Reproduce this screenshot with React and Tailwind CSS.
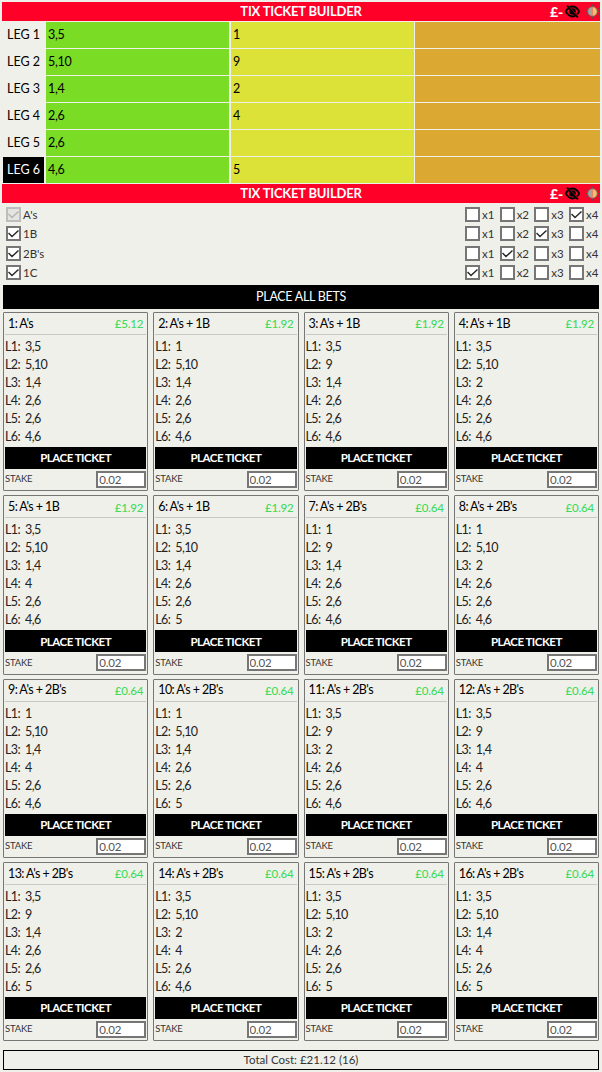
import React from "react";

const FONT = "[font-family:Lato,'Open_Sans',sans-serif]";

const legs = [
  ["LEG 1", "3,5", "1"],
  ["LEG 2", "5,10", "9"],
  ["LEG 3", "1,4", "2"],
  ["LEG 4", "2,6", "4"],
  ["LEG 5", "2,6", ""],
  ["LEG 6", "4,6", "5"],
];

const options = [
  ["A's", 4, true],
  ["1B", 3, false],
  ["2B's", 2, false],
  ["1C", 1, false],
];

const tickets = [
  ["1: A's", "£5.12", ["3,5", "5,10", "1,4", "2,6", "2,6", "4,6"]],
  ["2: A's + 1B", "£1.92", ["1", "5,10", "1,4", "2,6", "2,6", "4,6"]],
  ["3: A's + 1B", "£1.92", ["3,5", "9", "1,4", "2,6", "2,6", "4,6"]],
  ["4: A's + 1B", "£1.92", ["3,5", "5,10", "2", "2,6", "2,6", "4,6"]],
  ["5: A's + 1B", "£1.92", ["3,5", "5,10", "1,4", "4", "2,6", "4,6"]],
  ["6: A's + 1B", "£1.92", ["3,5", "5,10", "1,4", "2,6", "2,6", "5"]],
  ["7: A's + 2B's", "£0.64", ["1", "9", "1,4", "2,6", "2,6", "4,6"]],
  ["8: A's + 2B's", "£0.64", ["1", "5,10", "2", "2,6", "2,6", "4,6"]],
  ["9: A's + 2B's", "£0.64", ["1", "5,10", "1,4", "4", "2,6", "4,6"]],
  ["10: A's + 2B's", "£0.64", ["1", "5,10", "1,4", "2,6", "2,6", "5"]],
  ["11: A's + 2B's", "£0.64", ["3,5", "9", "2", "2,6", "2,6", "4,6"]],
  ["12: A's + 2B's", "£0.64", ["3,5", "9", "1,4", "4", "2,6", "4,6"]],
  ["13: A's + 2B's", "£0.64", ["3,5", "9", "1,4", "2,6", "2,6", "5"]],
  ["14: A's + 2B's", "£0.64", ["3,5", "5,10", "2", "4", "2,6", "4,6"]],
  ["15: A's + 2B's", "£0.64", ["3,5", "5,10", "2", "2,6", "2,6", "5"]],
  ["16: A's + 2B's", "£0.64", ["3,5", "5,10", "1,4", "4", "2,6", "5"]],
];

function SunHalf() {
  const rays = [0, 30, 60, 90, 120, 150, 180, 210, 240, 270, 300, 330];
  return (
    <svg width="15" height="15" viewBox="0 0 30 30" className="block">
      {rays.map((a) => (
        <line key={a} x1="15" y1="0.5" x2="15" y2="5.5" stroke="#6a4a4a" strokeWidth="2" transform={`rotate(${a} 15 15)`} />
      ))}
      <path d="M15 5.5a9.5 9.5 0 0 0 0 19z" fill="#a3a3a3" />
      <path d="M15 5.5a9.5 9.5 0 0 1 0 19z" fill="#f3bd6c" />
      <circle cx="15" cy="15" r="9.5" fill="none" stroke="#7a6a5a" strokeWidth="1.4" />
    </svg>
  );
}

function EyeOff() {
  return (
    <svg width="15" height="13" viewBox="0 0 30 26" fill="none" className="block">
      <path d="M1.5 13 C6 5.5 10 3 15 3 C20 3 24 5.5 28.5 13 C24 20.5 20 23 15 23 C10 23 6 20.5 1.5 13 Z" stroke="#000" strokeWidth="3.8" />
      <circle cx="15" cy="13" r="6.5" fill="#000" />
      <line x1="4" y1="1" x2="26" y2="25" stroke="#000" strokeWidth="3.8" />
      <line x1="8" y1="3" x2="27" y2="23.5" stroke="#ff0029" strokeWidth="1.2" />
    </svg>
  );
}

function Header() {
  return (
    <div className="relative mx-[2px] h-[19px] bg-[#ff0029] flex items-center justify-center text-white font-bold text-[13px] tracking-[-0.2px]">
      <span>TIX TICKET BUILDER</span>
      <div className="absolute right-[0px] top-[2px] flex items-center">
        <span className="text-[14px] leading-[15px] font-black mr-[2px]">£-</span>
        <EyeOff />
        <span className="ml-[5px]"><SunHalf /></span>
      </div>
    </div>
  );
}

function Check({ checked, disabled }) {
  return (
    <span
      className={`inline-flex items-center justify-center w-[15px] h-[15px] shrink-0 border-2 ${
        disabled ? "border-[#bdbdbd] bg-[#e4e4e0]" : "border-[#767676] bg-white"
      }`}
    >
      {checked && (
        <svg width="11" height="11" viewBox="0 0 11 11" fill="none">
          <path
            d="M0.5 5 L4 8.5 L10.5 2.5"
            stroke={disabled ? "#b5b5b5" : "#2a2a2a"}
            strokeWidth="1.5"
          />
        </svg>
      )}
    </span>
  );
}

function Ticket({ title, price, lines }) {
  return (
    <div className="h-[179.33px] border border-[#767676] rounded-[1px] flex flex-col px-[1px]">
      <div className="flex justify-between items-center h-[21px] mt-[1px] pl-[3px] pr-[3px] border-b border-[#c8c8c4] text-[12.5px] tracking-[-0.6px] leading-none">
        <span className="text-black">{title}</span>
        <span className="text-[#3ddc5c] font-medium text-[11.5px] tracking-[-0.2px]">{price}</span>
      </div>
      <div className="flex flex-col pt-[3px]">
        {lines.map((v, i) => (
          <div key={i} className="h-[18px] leading-[18px] text-[12.5px] tracking-[-0.6px] text-[#222] flex">
            <span className="w-[20px]">L{i + 1}:</span>
            <span>{v}</span>
          </div>
        ))}
      </div>
      <button className="mt-[1px] h-[22px] bg-black text-white font-bold text-[11.5px] tracking-[-0.5px]">
        PLACE TICKET
      </button>
      <div className="flex items-center justify-between mt-[2px]">
        <span className="text-[9.5px] tracking-[-0.2px] text-[#333]">STAKE</span>
        <input
          readOnly
          value="0.02"
          className="w-[50px] h-[17px] border-2 border-[#767676] bg-white text-[11.5px] tracking-[-0.2px] px-[1px] text-[#555] outline-none"
        />
      </div>
    </div>
  );
}

export default function App() {
  return (
    <div className={`w-[602px] h-[1072px] bg-[#f0f0ea] pt-[2px] overflow-hidden text-black ${FONT}`}>
      <Header />
      <div className="pt-[1px] px-[3px]">
        {legs.map(([leg, a, b], i) => (
          <div key={leg} className="grid grid-cols-[41px_183px_183px_184px] gap-x-[2px] h-[27px] text-[12.5px] tracking-[-0.3px] leading-none">
            <div className={`h-[26px] pt-[1px] flex items-center justify-center tracking-[0px] ${i === 5 ? "bg-black text-white" : ""}`}>{leg}</div>
            <div className="h-[26px] bg-[#7bdc26] flex items-center pl-[2px]">{a}</div>
            <div className="h-[26px] bg-[#dce238] flex items-center pl-[2px]">{b}</div>
            <div className="h-[26px] bg-[#dba832] -ml-[1px]"></div>
          </div>
        ))}
      </div>
      <Header />
      <div className="pl-[6px] pr-[3px] pt-[2px] h-[82px]">
        {options.map(([label, on, disabled]) => (
          <div key={label} className="flex items-center justify-between h-[19.33px] text-[11.5px] text-[#333]">
            <div className="flex items-center gap-[2px]">
              <Check checked disabled={disabled} />
              <span>{label}</span>
            </div>
            <div className="flex items-center">
              {[1, 2, 3, 4].map((n) => (
                <div key={n} className="flex items-center w-[34.7px] gap-[2px] last:w-[30px]">
                  <Check checked={on === n} />
                  <span>x{n}</span>
                </div>
              ))}
            </div>
          </div>
        ))}
      </div>
      <div className="mx-[3px] h-[24px] pt-[1px] bg-black text-white text-[12.5px] tracking-[-0.3px] flex items-center justify-center">PLACE ALL BETS</div>
      <div className="grid grid-cols-4 gap-x-[5px] gap-y-[4px] px-[3px] pt-[3px]">
        {tickets.map(([t, p, l]) => (
          <Ticket key={t} title={t} price={p} lines={l} />
        ))}
      </div>
      <div className="mx-[3px] mt-[8.7px] h-[20px] border border-black text-[11.5px] text-[#333] flex items-center justify-center">
        Total Cost: £21.12 (16)
      </div>
    </div>
  );
}
